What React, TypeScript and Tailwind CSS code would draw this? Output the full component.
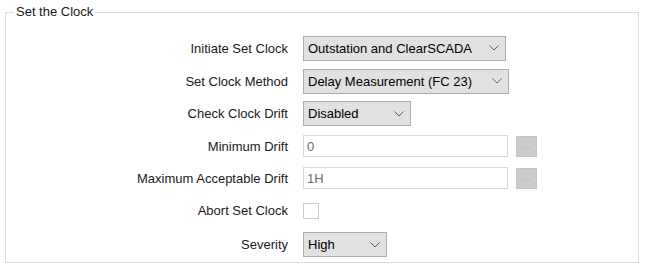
import React from 'react';

type Row = {
  label: string;
  h: string;
  control: React.ReactNode;
};

const Chevron = () => (
  <svg width="10" height="6" viewBox="0 0 10 6" className="shrink-0">
    <path d="M0.5 0.5 L5 5 L9.5 0.5" fill="none" stroke="#5f5f5f" strokeWidth="1" />
  </svg>
);

const Combo = ({ value, width }: { value: string; width: string }) => (
  <div className={`${width} h-[25px] border border-[#adadad] bg-[#e1e1e1] pl-[4px] pr-[6px] flex items-center justify-between text-black`}>
    <span className="whitespace-nowrap">{value}</span>
    <Chevron />
  </div>
);

const TextWithButton = ({ value }: { value: string }) => (
  <div className="flex items-center gap-[8px]">
    <div className="w-[205px] h-[22px] border border-[#d9d9d9] bg-white pl-[3px] flex items-center text-[#6d6d6d]">
      {value}
    </div>
    <div className="w-[21px] h-[21px] border border-[#c4c4c4] bg-[#cccccc] flex items-end justify-center pb-[5px]">
      <span className="text-[8px] leading-[8px] tracking-[1px] text-[#9a9a9a]">...</span>
    </div>
  </div>
);

export default function App() {
  const rows: Row[] = [
    { label: 'Initiate Set Clock', h: 'h-[34px]', control: <Combo value="Outstation and ClearSCADA" width="w-[203px]" /> },
    { label: 'Set Clock Method', h: 'h-[32px]', control: <Combo value="Delay Measurement (FC 23)" width="w-[206px]" /> },
    { label: 'Check Clock Drift', h: 'h-[33px]', control: <Combo value="Disabled" width="w-[108px]" /> },
    { label: 'Minimum Drift', h: 'h-[32px]', control: <TextWithButton value="0" /> },
    { label: 'Maximum Acceptable Drift', h: 'h-[32px]', control: <TextWithButton value="1H" /> },
    {
      label: 'Abort Set Clock',
      h: 'h-[33px]',
      control: <div className="w-[16px] h-[16px] border border-[#cccccc] bg-white" />,
    },
    { label: 'Severity', h: 'h-[35px]', control: <Combo value="High" width="w-[84px]" /> },
  ];

  return (
    <div
      className="w-[645px] h-[267px] bg-white pt-[4px] pl-[5px] text-[13px] leading-[15px] text-[#1a1a1a]"
      style={{ fontFamily: '"Liberation Sans", Arial, sans-serif' }}
    >
      <fieldset className="w-[634px] h-[259px] border border-[#dcdcdc] pl-[8px] pr-0 pb-0">
        <legend className="px-[2px] leading-[16px] text-[#1a1a1a]">Set the Clock</legend>
        <div className="pt-[11px] flex flex-col">
          {rows.map((row) => (
            <div key={row.label} className={`${row.h} flex items-center`}>
              <div className="w-[274px] text-right whitespace-nowrap">{row.label}</div>
              <div className="ml-[15px]">{row.control}</div>
            </div>
          ))}
        </div>
      </fieldset>
    </div>
  );
}
